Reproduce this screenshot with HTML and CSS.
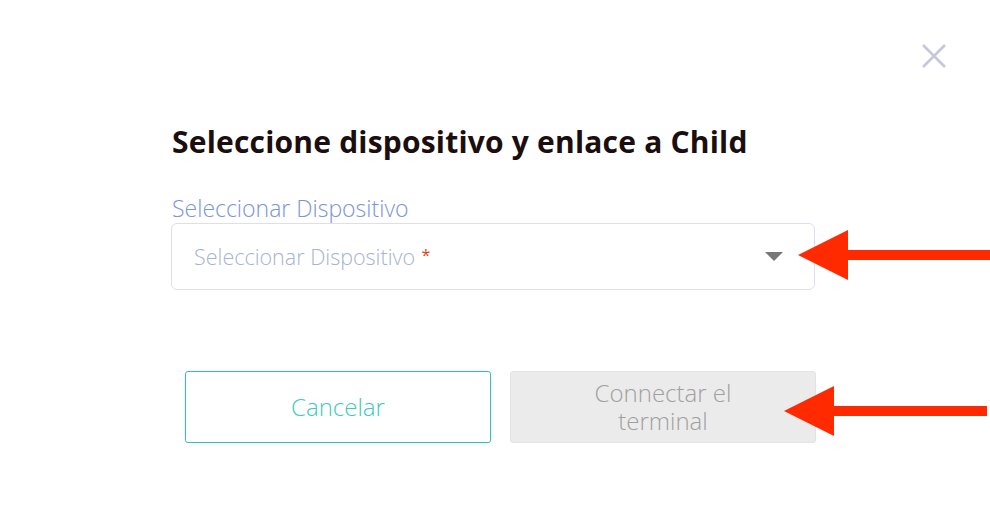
FILE: index.html
```html
<!DOCTYPE html>
<html lang="es">
<head>
    <meta charset="UTF-8">
    <meta name="viewport" content="width=device-width, initial-scale=1.0">
    <title>Seleccione dispositivo</title>
    <link rel="stylesheet" href="styles.css">
</head>
<body>
    <div class="modal">
        <button class="btn-cerrar" aria-label="Cerrar">
            <svg width="26" height="26" viewBox="0 0 26 26">
                <path d="M2 2 L24 24 M24 2 L2 24" stroke="#c5c8da" stroke-width="2.6" fill="none"/>
            </svg>
        </button>
        <h2 class="titulo">Seleccione dispositivo y enlace a Child</h2>
        <label class="etiqueta">Seleccionar Dispositivo</label>
        <div class="fila">
            <div class="selector">
                <span class="placeholder">Seleccionar Dispositivo <span class="requerido">*</span></span>
                <span class="triangulo"></span>
            </div>
            <div class="flecha flecha-1"></div>
        </div>
        <div class="fila botones">
            <button class="btn-cancelar">Cancelar</button>
            <button class="btn-conectar" disabled>Connectar el terminal</button>
            <div class="flecha flecha-2"></div>
        </div>
    </div>
</body>
</html>
```

FILE: styles.css
```css
body {
    margin: 0;
    background: #ffffff;
    font-family: "Open Sans", "Noto Sans", sans-serif;
    overflow: hidden;
}
.modal {
    position: relative;
    width: 990px;
    height: 510px;
    padding: 122px 0 0 172px;
    box-sizing: border-box;
}
.btn-cerrar {
    position: absolute;
    top: 43px;
    left: 921px;
    padding: 0;
    border: none;
    background: none;
    cursor: pointer;
}
.titulo {
    margin: 0;
    font-size: 30px;
    font-weight: 700;
    color: #1b0e0e;
    line-height: 40px;
    letter-spacing: 0.2px;
}
.etiqueta {
    display: block;
    margin-top: 31px;
    font-size: 23px;
    font-weight: 300;
    color: #7c95d6;
    line-height: 30px;
}
.fila {
    display: flex;
    align-items: center;
}
.selector {
    flex: none;
    width: 644px;
    height: 67px;
    margin-left: -1px;
    border: 1px solid #dde0ec;
    border-radius: 6px;
    display: flex;
    align-items: center;
    justify-content: space-between;
    padding: 0 31px 0 22px;
    box-sizing: border-box;
}
.placeholder {
    font-size: 21.5px;
    font-weight: 300;
    color: #a9b2d2;
}
.requerido {
    color: #e23c1c;
    font-size: 16px;
    font-weight: 400;
    vertical-align: 4px;
    margin-left: 1px;
}
.triangulo {
    width: 0;
    height: 0;
    border-left: 9.5px solid transparent;
    border-right: 9.5px solid transparent;
    border-top: 9px solid #777777;
}
.flecha {
    flex: none;
    position: relative;
    height: 10px;
    background: #ff2a00;
}
.flecha::before {
    content: "";
    position: absolute;
    left: -50px;
    top: -20px;
    border-top: 25px solid transparent;
    border-bottom: 25px solid transparent;
    border-right: 50px solid #ff2a00;
}
.flecha-1 {
    width: 143px;
    margin-left: 33px;
    margin-top: -3px;
}
.flecha-2 {
    width: 153px;
    margin-left: -1px;
    margin-top: 8px;
}
.botones {
    margin-top: 81px;
    padding-left: 13px;
    gap: 19px;
}
.btn-cancelar, .btn-conectar {
    flex: none;
    width: 306px;
    height: 72px;
    font-family: "Open Sans", "Noto Sans", sans-serif;
    font-size: 24px;
    font-weight: 300;
    border-radius: 3px;
    line-height: 28px;
}
.btn-cancelar {
    background: #ffffff;
    border: 1px solid #2cc4b8;
    color: #3dcbbd;
}
.btn-conectar {
    background: #ebebeb;
    border: 1px solid #e3e3e3;
    color: #a0a0a0;
    padding: 0 70px;
}
```
